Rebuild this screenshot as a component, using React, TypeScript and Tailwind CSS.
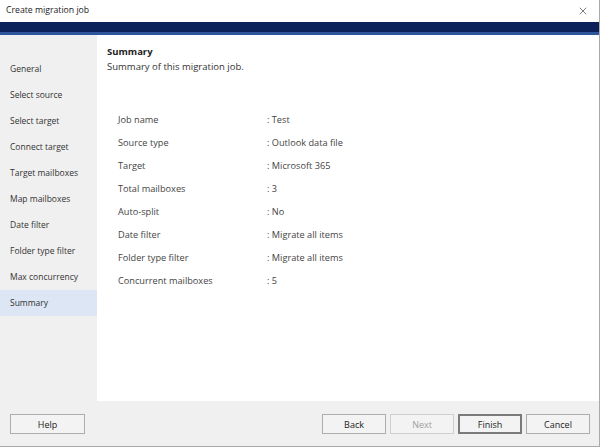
import { X } from 'lucide-react';

const steps = [
  'General',
  'Select source',
  'Select target',
  'Connect target',
  'Target mailboxes',
  'Map mailboxes',
  'Date filter',
  'Folder type filter',
  'Max concurrency',
  'Summary',
];

const summary: [string, string][] = [
  ['Job name', 'Test'],
  ['Source type', 'Outlook data file'],
  ['Target', 'Microsoft 365'],
  ['Total mailboxes', '3'],
  ['Auto-split', 'No'],
  ['Date filter', 'Migrate all items'],
  ['Folder type filter', 'Migrate all items'],
  ['Concurrent mailboxes', '5'],
];

function DialogButton({ label, disabled, primary, wide }: { label: string; disabled?: boolean; primary?: boolean; wide?: boolean }) {
  return (
    <button
      disabled={disabled}
      className={
        (wide ? 'w-[75px] ' : 'w-[64px] ') +
        'h-[20px] bg-[#f3f3f3] text-[9px] leading-none ' +
        (primary ? 'border-2 border-[#7a7a7a] ' : 'border border-[#adadad] ') +
        (disabled ? 'text-[#a0a0a0] border-[#cfcfcf]' : 'text-[#222]')
      }
    >
      {label}
    </button>
  );
}

export default function App() {
  const active = 'Summary';
  return (
    <div className="w-[602px] h-[447px] bg-white font-['Open_Sans',sans-serif] overflow-hidden">
      <div className="w-[600px] h-[447px] flex flex-col border-r border-b border-[#a9a9a9]">
        {/* title bar */}
        <div className="h-[22px] flex items-center justify-between pl-[6px] pr-[10px] bg-white">
          <span className="text-[8.7px] text-[#1a1a1a]">Create migration job</span>
          <X size={12} strokeWidth={1.3} className="text-[#333]" />
        </div>
        <div className="h-[10px] bg-[#0c2159]" />
        <div className="h-[3px] bg-[#2f559b]" />

        <div className="flex flex-1 min-h-0">
          {/* step list */}
          <div className="w-[97px] bg-[#f0f0f0] pt-[21px] flex flex-col">
            {steps.map((s) => (
              <div
                key={s}
                className={
                  'h-[26px] flex items-center pl-[10px] text-[8.5px] text-[#333] ' +
                  (s === active ? 'bg-[#dce6f4]' : '')
                }
              >
                {s}
              </div>
            ))}
          </div>

          {/* content */}
          <div className="flex-1 bg-white pl-[10px] pt-[9px]">
            <div className="text-[9.5px] font-bold text-[#222] leading-[15px]">Summary</div>
            <div className="text-[9.5px] text-[#333] leading-[15px]">Summary of this migration job.</div>
            <div className="mt-[34px] pl-[11px] flex flex-col">
              {summary.map(([k, v]) => (
                <div key={k} className="h-[23px] flex items-center text-[9.2px] text-[#444]">
                  <span className="w-[149px]">{k}</span>
                  <span>: {v}</span>
                </div>
              ))}
            </div>
          </div>
        </div>

        {/* footer */}
        <div className="h-[45px] bg-[#f0f0f0] flex items-center pl-[10px] pr-[9px] pt-[1px]">
          <DialogButton label="Help" wide />
          <div className="flex-1" />
          <div className="flex gap-[4px]">
            <DialogButton label="Back" />
            <DialogButton label="Next" disabled />
            <DialogButton label="Finish" primary />
            <DialogButton label="Cancel" />
          </div>
        </div>
      </div>
    </div>
  );
}
